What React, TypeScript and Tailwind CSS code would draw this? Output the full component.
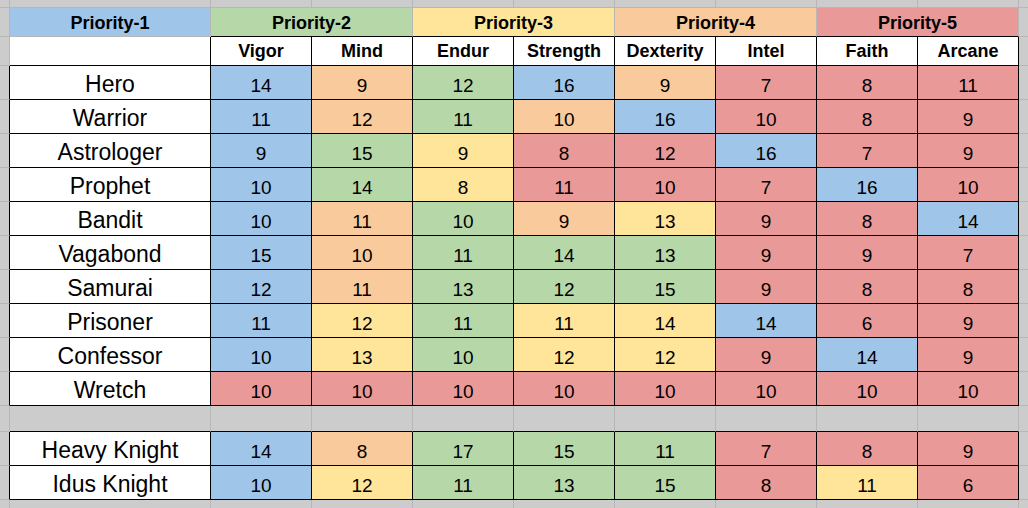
import React from "react";

type Line = "k" | "g" | "n";
type Tone = "blue" | "green" | "yellow" | "orange" | "red" | "white" | "none";

const R: Record<Line, string> = {
  k: "border-r border-r-black",
  g: "border-r border-r-[#b7b7b7]",
  n: "",
};
const B: Record<Line, string> = {
  k: "border-b border-b-black",
  g: "border-b border-b-[#b7b7b7]",
  n: "",
};
const BG: Record<Tone, string> = {
  blue: "bg-[#9fc5e8]",
  green: "bg-[#b6d7a8]",
  yellow: "bg-[#ffe599]",
  orange: "bg-[#f9cb9c]",
  red: "bg-[#ea9999]",
  white: "bg-white",
  none: "",
};

const b = "blue", gr = "green", y = "yellow", o = "orange", r = "red";

const STATS = ["Vigor", "Mind", "Endur", "Strength", "Dexterity", "Intel", "Faith", "Arcane"];

const PRIORITIES: { label: string; tone: Tone; span: string }[] = [
  { label: "Priority-2", tone: "green", span: "col-span-2" },
  { label: "Priority-3", tone: "yellow", span: "col-span-2" },
  { label: "Priority-4", tone: "orange", span: "col-span-2" },
  { label: "Priority-5", tone: "red", span: "col-span-2" },
];

type Row = { name: string; vals: [number, Tone][] };

const CLASSES: Row[] = [
  { name: "Hero", vals: [[14, b], [9, o], [12, gr], [16, b], [9, o], [7, r], [8, r], [11, r]] },
  { name: "Warrior", vals: [[11, b], [12, o], [11, gr], [10, o], [16, b], [10, r], [8, r], [9, r]] },
  { name: "Astrologer", vals: [[9, b], [15, gr], [9, y], [8, r], [12, r], [16, b], [7, r], [9, r]] },
  { name: "Prophet", vals: [[10, b], [14, gr], [8, y], [11, r], [10, r], [7, r], [16, b], [10, r]] },
  { name: "Bandit", vals: [[10, b], [11, o], [10, gr], [9, o], [13, y], [9, r], [8, r], [14, b]] },
  { name: "Vagabond", vals: [[15, b], [10, o], [11, gr], [14, gr], [13, gr], [9, r], [9, r], [7, r]] },
  { name: "Samurai", vals: [[12, b], [11, o], [13, gr], [12, gr], [15, gr], [9, r], [8, r], [8, r]] },
  { name: "Prisoner", vals: [[11, b], [12, y], [11, gr], [11, y], [14, y], [14, b], [6, r], [9, r]] },
  { name: "Confessor", vals: [[10, b], [13, y], [10, gr], [12, y], [12, y], [9, r], [14, b], [9, r]] },
  { name: "Wretch", vals: [[10, r], [10, r], [10, r], [10, r], [10, r], [10, r], [10, r], [10, r]] },
];

const EXTRA: Row[] = [
  { name: "Heavy Knight", vals: [[14, b], [8, o], [17, gr], [15, gr], [11, gr], [7, r], [8, r], [9, r]] },
  { name: "Idus Knight", vals: [[10, b], [12, y], [11, gr], [13, gr], [15, gr], [8, r], [11, y], [6, r]] },
];

function Cell({
  r: right = "n",
  b: bottom = "n",
  tone = "none",
  className = "",
  children,
}: {
  r?: Line;
  b?: Line;
  tone?: Tone;
  className?: string;
  children?: React.ReactNode;
}) {
  return (
    <div className={`flex items-end justify-center min-w-0 overflow-hidden leading-none ${R[right]} ${B[bottom]} ${BG[tone]} ${className}`}>
      {children}
    </div>
  );
}

function DataRow({ row }: { row: Row }) {
  return (
    <>
      <Cell r="k" b="g" />
      <Cell r="k" b="k" tone="white" className="text-[23px] pb-[3px]">
        {row.name}
      </Cell>
      {row.vals.map(([v, t], i) => (
        <Cell key={i} r="k" b="k" tone={t} className="text-[19px] pb-[4px]">
          {v}
        </Cell>
      ))}
      <Cell b="g" />
    </>
  );
}

export default function App() {
  const blanks = Array.from({ length: 9 });
  return (
    <div className="w-[1028px] h-[508px] overflow-hidden bg-[#cccccc] text-black font-['Liberation_Sans',Arial,sans-serif]">
      <div className="grid grid-cols-[10px_201px_repeat(8,101px)_9px] grid-rows-[8px_29px_29px_repeat(10,34px)_26px_34px_34px_8px] h-full">
        {/* top gutter */}
        <Cell r="g" b="g" />
        {blanks.map((_, i) => (
          <Cell key={`t${i}`} r="g" b="g" />
        ))}
        <Cell b="g" />

        {/* priority row */}
        <Cell r="g" b="g" />
        <Cell r="g" b="g" tone="blue" className="font-bold text-[18px] pb-[4px]">
          Priority-1
        </Cell>
        {PRIORITIES.map((p) => (
          <Cell key={p.label} r="g" b="k" tone={p.tone} className={`${p.span} font-bold text-[18px] pb-[4px]`}>
            {p.label}
          </Cell>
        ))}
        <Cell b="g" />

        {/* stat headers */}
        <Cell r="g" b="g" />
        <Cell r="k" b="k" tone="white" />
        {STATS.map((s) => (
          <Cell key={s} r="k" b="k" tone="white" className="font-bold text-[18px] pb-[5px]">
            {s}
          </Cell>
        ))}
        <Cell b="g" />

        {CLASSES.map((row) => (
          <DataRow key={row.name} row={row} />
        ))}

        {/* gap row */}
        <Cell r="g" b="g" />
        {blanks.map((_, i) => (
          <Cell key={`g${i}`} r="g" b="k" />
        ))}
        <Cell b="g" />

        {EXTRA.map((row) => (
          <DataRow key={row.name} row={row} />
        ))}

        {/* bottom gutter */}
        <Cell r="g" />
        {blanks.map((_, i) => (
          <Cell key={`b${i}`} r="g" />
        ))}
        <Cell />
      </div>
    </div>
  );
}
